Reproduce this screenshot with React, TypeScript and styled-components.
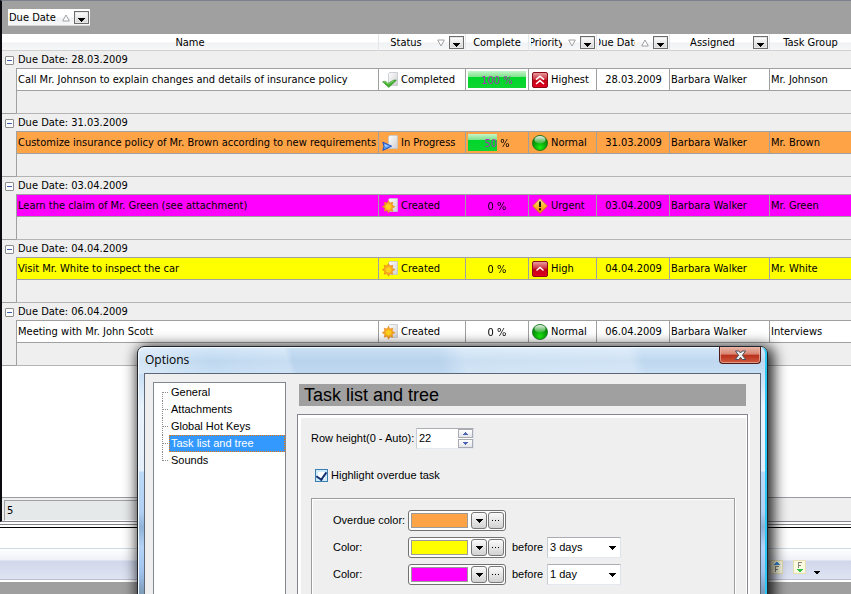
import React, { useState } from "react";
import styled, { createGlobalStyle, css } from "styled-components";

const GlobalStyle = createGlobalStyle`
  * { box-sizing: border-box; }
  body { margin: 0; overflow: hidden; }
  button, input, select { font: inherit; color: inherit; margin: 0; }
`;

const listFont = `"DejaVu Sans Condensed", "Noto Sans", sans-serif`;
const dialogFont = `"Liberation Sans", sans-serif`;
const line = "#a0a0a0";

const Page = styled.div`
  position: relative;
  display: flex;
  flex-direction: column;
  height: 100vh;
  overflow: hidden;
  background: #fff;
  color: #000;
  font: 11px/14px ${listFont};
`;

const TaskWindow = styled.main`
  flex: 1;
  display: flex;
  flex-direction: column;
  border-left: 2px solid #0b0b10;
  border-top: 1px solid #7c808c;
  border-bottom: 1px solid #85858f;
  background: #fff;
`;

const GroupPanel = styled.div`
  display: flex;
  padding: 8px 6px;
  background: ${line};
`;

const headerFill = css`
  background: linear-gradient(#fff 0 50%, #f1f2f4 55%, #f6f7f8);
`;

const GroupChip = styled.div`
  display: flex;
  align-items: center;
  height: 17px;
  padding: 1px 1px 0;
  border-bottom: 1px solid #d5d5d5;
  ${headerFill}
`;

const HeadInner = styled.div`
  display: flex;
  align-items: center;
  height: 15px;
`;

const HeadLabel = styled.span`
  display: flex;
  flex: 1;
  min-width: 0;
  justify-content: center;
  overflow: hidden;
  white-space: nowrap;
`;

const SortMark = styled.svg`
  flex: none;
  width: 8px;
  height: 8px;
  margin: 0 4px 0 6px;
`;

const FilterButton = styled.button`
  flex: none;
  width: 15px;
  height: 13px;
  padding: 0;
  border: 1px solid #6c6c6c;
  background: linear-gradient(#fff, #d4d4d4);
  box-shadow: inset 0 0 0 1px #e8e8e8;
  line-height: 0;
  svg { display: block; margin: 5px auto 0; }
`;

const TaskTable = styled.table`
  width: 100%;
  table-layout: fixed;
  border-spacing: 0;
  td, th { padding: 0; font-weight: normal; white-space: nowrap; }
`;

const Column = styled.col<{ $w?: number }>`
  ${(p) => p.$w && `width: ${p.$w}px;`}
`;

const HeadCell = styled.th<{ $tool?: boolean }>`
  && { padding-top: 1px; }
  height: 17px;
  border-bottom: 1px solid #d0d0d0;
  border-left: 1px solid #e4e6ea;
  &:first-child { border-left: 0; }
  ${headerFill}
  ${HeadInner} { padding: ${(p) => (p.$tool ? "0 1px 0 2px" : "0")}; }
`;

const GroupCell = styled.td`
  height: 17px;
  background: #efefef;
`;

const GroupTitle = styled.div`
  display: flex;
  align-items: center;
  gap: 4px;
  height: 17px;
  padding: 1px 0 0 3px;
`;

const Collapse = styled.button`
  width: 9px;
  height: 9px;
  padding: 0 1px;
  border: 1px solid #8c8c8c;
  border-radius: 1px;
  background: #fff;
  &::after { content: ""; display: block; height: 1px; background: #3f5fae; }
`;

const Indent = styled.td`
  background: #efefef;
`;

const BottomIndent = styled(Indent)`
  border-bottom: 1px solid ${line};
`;

const TaskRow = styled.tr<{ $fill: string }>`
  td:not(:first-child) {
    height: 23px;
    border: solid ${line};
    border-width: 1px 0 1px 1px;
    background: ${(p) => p.$fill};
  }
`;

const Cell = styled.div<{ $pad?: number; $center?: boolean }>`
  display: flex;
  align-items: center;
  justify-content: ${(p) => (p.$center ? "center" : "flex-start")};
  gap: 3px;
  height: 21px;
  padding-top: 1px;
  padding-left: ${(p) => p.$pad ?? 1}px;
  overflow: hidden;
  svg { flex: none; }
`;

const Spacer = styled.td`
  height: 23px;
  border-left: 1px solid ${line};
  border-bottom: 1px solid #b4b4b4;
  background: #efefef;
`;

const Progress = styled.div<{ $value: number }>`
  height: 17px;
  margin: 0 2px;
  background: linear-gradient(#c6f5c9, #7be28a 35%, #00d62c 36%, #0fd52f) no-repeat;
  background-size: ${(p) => p.$value}% 100%;
`;

const ProgressText = styled.span<{ $value: number }>`
  display: block;
  padding-top: 2px;
  line-height: 15px;
  text-align: center;
  color: transparent;
  background: linear-gradient(to right, #b02cb4 ${(p) => p.$value}%, #000 ${(p) => p.$value}%);
  background-clip: text;
`;

const Blank = styled.div`
  flex: 1;
`;

const Footer = styled.footer`
  display: grid;
  grid-template-columns: 373px 1fr;
  height: 24px;
  padding: 2px;
  border-top: 1px solid #9a9aa2;
  background: #efefef;
`;

const FooterCell = styled.div`
  padding: 1px 2px;
  border: 1px solid;
  border-color: ${line} #fff #fff ${line};
  background: #e6e9e9;
  line-height: 17px;
`;

const Splitter = styled.div`
  height: 6px;
  border-top: 1px solid #fff;
  border-bottom: 1px solid #000;
  background: linear-gradient(#fff 0 1px, #808089 1px 2px, #fff 2px);
`;

const BottomHead = styled.div`
  height: 21px;
  border-bottom: 1px solid #cfd9e4;
`;

const BottomBar = styled.div`
  display: flex;
  align-items: center;
  justify-content: flex-end;
  gap: 10px;
  height: 33px;
  padding: 4px 31px 0 0;
  border-bottom: 2px solid #fff;
  background: linear-gradient(#fff 0, #eef1f8 11px, #d1d7eb 12px, #dfe4f4 30px, #b9c0d2 30px 31px);
`;

const BarButton = styled.button`
  padding: 0;
  border: 0;
  background: none;
  line-height: 0;
`;

const MoreButton = styled(BarButton)`
  margin-left: -2px;
  padding-top: 12px;
`;

const BottomBody = styled.div`
  height: 12px;
  background: #9f9f9f;
`;

/* ---------- dialog ---------- */

const Dialog = styled.section`
  position: absolute;
  top: 346px;
  left: 137px;
  right: 83px;
  display: flex;
  flex-direction: column;
  min-height: 300px;
  padding: 0 6px;
  border: 1px solid #20242c;
  border-radius: 7px 7px 0 0;
  background:
    linear-gradient(75deg, #ffffff55 0, transparent 12%, #ffffff22 24%, #9fc0e033 25%, #9fc0e033 48%, #ffffff33 52%, #ffffff44 78%, transparent 80%) 0 0 / 100% 27px no-repeat,
    linear-gradient(#d5e8fa 0, #bfd8ef 14px, #c8dff5 27px, #e9f3fc 60px, #e4effb 124px, #bcd9f8 125px, #b2d0f2 165px, #8fb2d6 180px, #b5d3f6 200px, #9fc2ee 225px, #809dba 245px);
  box-shadow: inset 1px 1px 0 #f4faff, inset -2px 0 0 #2cc8f5, 3px 3px 14px 3px rgba(0, 0, 0, 0.85);
  font: 11px/13px ${dialogFont};
`;

const TitleBar = styled.header`
  display: flex;
  align-items: flex-start;
  justify-content: space-between;
  height: 26px;
  padding-left: 1px;
`;

const Title = styled.h1`
  margin: 0;
  font: 12px/26px "Open Sans", "Noto Sans", sans-serif;
`;

const CloseButton = styled.button`
  display: grid;
  place-items: center;
  width: 42px;
  height: 17px;
  padding: 0;
  border: 1px solid #4d1a1a;
  border-top: 0;
  border-radius: 0 0 4px 4px;
  background: linear-gradient(#e8b5a6, #d98471 45%, #b8301a 50%, #cf5a40);
  box-shadow: inset 0 0 0 1px #f0b8a8aa;
`;

const Body = styled.div`
  flex: 1;
  display: grid;
  grid-template-columns: 133px 1fr;
  column-gap: 11px;
  padding: 8px 12px 0 8px;
  border: 1px solid #5b6676;
  background: #efefef;
`;

const Tree = styled.ul`
  margin: 0;
  padding: 1px 0 0 7px;
  border: 1px solid #828790;
  background: #fff;
  list-style: none;
`;

const TreeItem = styled.li`
  display: flex;
  height: 17px;
`;

const TreeButton = styled.button<{ $on: boolean }>`
  padding: 0 1px;
  border: 1px dotted transparent;
  background: none;
  text-align: left;
  white-space: nowrap;
  ${(p) =>
    p.$on &&
    css`
      flex: 1;
      border-color: #f07800;
      background: #3399ff;
      color: #fff;
    `}
`;

const Content = styled.div`
  display: flex;
  flex-direction: column;
  gap: 8px;
  padding-top: 2px;
`;

const Heading = styled.h2`
  margin: 0 2px;
  padding-left: 5px;
  background: ${line};
  font: 18px/22px ${dialogFont};
`;

const Panel = styled.div`
  flex: 1;
  display: flex;
  flex-direction: column;
  padding: 13px 13px 0;
  border: 1px solid #85858f;
  border-bottom: 0;
  box-shadow: inset 3px 3px 0 #fff, inset -1px 0 0 #fff, 2px 0 0 #fff;
`;

const Field = styled.div`
  display: flex;
  align-items: center;
  label { white-space: nowrap; }
`;

const HeightLabel = styled.label`
  width: 105px;
`;

const Spin = styled.div`
  display: flex;
  width: 58px;
  height: 21px;
  border: 1px solid;
  border-color: #abadb3 #dde3ec #e3e9ef #c8ced8;
  background: #fff;
`;

const SpinInput = styled.input`
  flex: 1;
  min-width: 0;
  padding: 0 2px;
  border: 0;
  outline: 0;
  background: none;
  appearance: textfield;
  &::-webkit-inner-spin-button { appearance: none; }
`;

const SpinArrows = styled.div`
  display: grid;
  grid-template-rows: 1fr 1fr;
  gap: 1px;
  width: 15px;
`;

const SpinButton = styled.button`
  display: grid;
  place-items: center;
  padding: 0;
  border: 1px solid #a9abb0;
  background: linear-gradient(#fff, #e2e4e8);
`;

const CheckField = styled(Field)`
  gap: 3px;
  margin: 20px 0 16px 4px;
`;

const Check = styled.input`
  display: grid;
  place-items: center;
  appearance: none;
  width: 13px;
  height: 13px;
  border: 1px solid #3c7fb1;
  background: #fff;
  box-shadow: inset 0 0 0 2px #cfeafb;
  &:checked::after {
    content: "";
    width: 5px;
    height: 8px;
    margin-bottom: 2px;
    border: solid #12306f;
    border-width: 0 2px 2px 0;
    rotate: 35deg;
  }
`;

const Colors = styled.fieldset`
  flex: 1;
  display: flex;
  flex-direction: column;
  gap: 6px;
  min-width: 0;
  margin: 0 -1px 0 0;
  padding: 11px 21px 0;
  border: 1px solid #9c9c9c;
  border-bottom: 0;
  box-shadow: inset 1px 1px 0 #fff, 1px 0 0 #fff;
`;

const ColorLabel = styled.label`
  width: 75px;
`;

const BeforeLabel = styled.label`
  width: 41px;
  padding-left: 6px;
`;

const Picker = styled.div`
  display: flex;
  gap: 1px;
  width: 98px;
  height: 21px;
  padding: 1px;
  border: 1px solid #727272;
  border-radius: 3px;
  background: #fff;
`;

const Swatch = styled.button<{ $color: string }>`
  flex: 1;
  margin: 1px 2px 1px 1px;
  padding: 0;
  border: 1px solid #9c9c9c;
  background: ${(p) => p.$color};
`;

const PickerButton = styled.button`
  display: grid;
  place-items: center;
  width: 16px;
  padding: 0;
  border: 1px solid #777;
  border-radius: 3px;
  background: linear-gradient(#fafafa, #d2d2d2);
`;

const SelectBox = styled.div`
  display: grid;
  align-items: center;
  width: 74px;
  height: 21px;
  border: 1px solid;
  border-color: #abadb3 #dde3ec #e3e9ef #c8ced8;
  background: #fff;
  > * { grid-area: 1 / 1; }
  svg { justify-self: end; margin-right: 4px; pointer-events: none; }
`;

const Select = styled.select`
  width: 100%;
  height: 18px;
  padding: 0 2px;
  border: 0;
  outline: 0;
  appearance: none;
  background: none;
`;

/* ---------- drawings ---------- */

const Down = ({ w = 7 }: { w?: number }) => (
  <svg width={w} height="4" viewBox="0 0 7 4" shapeRendering="crispEdges">
    <path d="M0 0h7v1H6v1H5v1H4v1H3V3H2V2H1V1H0z" fill="#000" />
  </svg>
);

const Sort = ({ up }: { up?: boolean }) => (
  <SortMark viewBox="0 0 8 8">
    <path d={up ? "M4 1L7.3 7H.7z" : "M4 7L.7 1h6.6z"} fill="#fff" stroke="#a0a0a0" strokeWidth="1" />
  </SortMark>
);

const Filter = ({ name }: { name: string }) => (
  <FilterButton aria-label={`Filter ${name}`}>
    <Down />
  </FilterButton>
);

const Paper = ({ children }: { children: React.ReactNode }) => (
  <svg width="16" height="16" viewBox="0 0 16 16">
    <defs>
      <linearGradient id="paper" x1="0" y1="0" x2="1" y2="1">
        <stop offset="0" stopColor="#fff" />
        <stop offset="1" stopColor="#cfcfd2" />
      </linearGradient>
    </defs>
    <path d="M7.5.5h8v13h-9V2z" fill="url(#paper)" stroke="#c3c6cc" strokeWidth=".8" />
    {children}
  </svg>
);

type Status = "Completed" | "In Progress" | "Created";
type Priority = "Highest" | "High" | "Urgent" | "Normal";

const StatusIcon = ({ status }: { status: Status }) => {
  if (status === "Completed")
    return (
      <Paper>
        <path d="M.6 9.8l3-.6 2.2 2.2L12 8l2.400.2-7.600 7.200z" fill="#3fae2c" stroke="#2c8d1e" strokeWidth=".6" />
        <path d="M2 10l1.600-.2 2.300 2.400L12 8.800" fill="none" stroke="#8fe07c" strokeWidth=".8" />
      </Paper>
    );
  if (status === "In Progress")
    return (
      <Paper>
        <path d="M.8 7.200L9.600 11.200.8 15.400 2 11.300z" fill="#5a9bf5" stroke="#1d4fc0" />
        <path d="M2.500 9.300l4.500 1.900-4 .2z" fill="#b9dbff" />
      </Paper>
    );
  return (
    <Paper>
      <path
        d="M6.500 2.400L7.900 5.100 10.800 4.200 10.100 7.100 12.800 8.700 10.100 10.300 10.800 13.200 7.900 12.500 6.500 15.200 5.100 12.500 2.200 13.200 2.900 10.300.3 8.700 2.900 7.100 2.200 4.200 5.100 5.100z"
        fill="#f9a424"
        stroke="#e58416"
        strokeWidth=".6"
      />
      <circle cx="6.500" cy="8.800" r="3" fill="#ffd21e" stroke="#f4b01c" strokeWidth=".6" />
    </Paper>
  );
};

const PriorityIcon = ({ priority }: { priority: Priority }) => (
  <svg width="16" height="16" viewBox="0 0 16 16">
    <defs>
      <linearGradient id="red" x1="0" y1="0" x2="0" y2="1">
        <stop offset="0" stopColor="#e9a3a6" />
        <stop offset=".45" stopColor="#cf3340" />
        <stop offset=".5" stopColor="#c00016" />
        <stop offset="1" stopColor="#e3001f" />
      </linearGradient>
      <radialGradient id="green" cx=".5" cy=".8" r=".75">
        <stop offset="0" stopColor="#1ff012" />
        <stop offset=".5" stopColor="#0ba80a" />
        <stop offset="1" stopColor="#067a0a" />
      </radialGradient>
      <linearGradient id="gloss" x1="0" y1="0" x2="0" y2="1">
        <stop offset="0" stopColor="#fff" stopOpacity=".9" />
        <stop offset="1" stopColor="#fff" stopOpacity=".15" />
      </linearGradient>
      <linearGradient id="amber" x1="0" y1="0" x2="0" y2="1">
        <stop offset="0" stopColor="#ffe9a8" />
        <stop offset=".5" stopColor="#ffb52a" />
        <stop offset="1" stopColor="#ee7d00" />
      </linearGradient>
    </defs>
    {(priority === "Highest" || priority === "High") && (
      <rect x=".5" y=".5" width="15" height="15" rx="1.5" fill="url(#red)" stroke="#8c0a18" />
    )}
    {priority === "Highest" && (
      <path d="M4 7.600L8 4.200l4 3.400M4 12l4-3.400 4 3.400" fill="none" stroke="#fff" strokeWidth="1.500" />
    )}
    {priority === "High" && <path d="M4.500 9.500L8 6.500l3.500 3" fill="none" stroke="#fff" strokeWidth="1.500" />}
    {priority === "Normal" && (
      <>
        <circle cx="8" cy="8" r="7.600" fill="url(#green)" stroke="#0b6b12" strokeWidth=".7" />
        <ellipse cx="8" cy="4.800" rx="5.600" ry="3.800" fill="url(#gloss)" />
      </>
    )}
    {priority === "Urgent" && (
      <>
        <path d="M8 .6L15.400 8 8 15.400.6 8z" fill="url(#amber)" stroke="#c96f10" strokeWidth=".8" strokeLinejoin="round" />
        <path d="M7 3.500h2v5.500H7zM7 10.200h2v2H7z" fill="#1a1208" />
      </>
    )}
  </svg>
);

const Branch = ({ first, last }: { first?: boolean; last?: boolean }) => (
  <svg width="8" height="17" viewBox="0 0 8 17" shapeRendering="crispEdges">
    <path
      d={`M1.500 ${first ? 8 : 0}V${last ? 9 : 17}M2 8.500H8`}
      fill="none"
      stroke="#8d8d8d"
      strokeDasharray="1 1"
    />
  </svg>
);

const SpinMark = ({ up }: { up?: boolean }) => (
  <svg width="5" height="3" viewBox="0 0 5 3" shapeRendering="crispEdges">
    <path d={up ? "M2 0h1v1h1v1h1v1H0V2h1V1h1z" : "M0 0h5v1H4v1H3v1H2V2H1V1H0z"} fill="#4a66b4" />
  </svg>
);

const FilterMark = ({ up }: { up?: boolean }) => (
  <svg width="13" height="14" viewBox="0 0 13 14" shapeRendering="crispEdges">
    <rect x=".5" y=".5" width="12" height="13" fill="#fbfae0" stroke="#e6dfb4" />
    {up ? (
      <path d="M6 2h2v1h1v1h1v1H4V4h1V3h1z" fill="#3c8fdc" />
    ) : (
      <path d="M4 9h6v1H9v1H8v1H6v-1H5v-1H4z" fill="#35c24a" />
    )}
    <path d={up ? "M5 12V6.500h4M5 9.500h3" : "M5 8V2.500h4M5 5.500h3"} fill="none" stroke="#85857a" strokeWidth="1" />
  </svg>
);

const CloseMark = () => (
  <svg width="13" height="11" viewBox="0 0 13 11">
    <path
      d="M1.500 1h3.300l1.700 2 1.700-2h3.300L8.400 5.300l3.300 4.200H8.300l-1.800-2.200-1.800 2.200H1.300l3.300-4.200z"
      fill="#f4f4f4"
      stroke="#4b4f5c"
      strokeWidth="1"
    />
  </svg>
);

/* ---------- data ---------- */

interface Task {
  due: string;
  name: string;
  status: Status;
  complete: number;
  priority: Priority;
  group: string;
  fill: string;
}

const tasks: Task[] = [
  { due: "28.03.2009", name: "Call Mr. Johnson to explain changes and details of insurance policy", status: "Completed", complete: 100, priority: "Highest", group: "Mr. Johnson", fill: "#ffffff" },
  { due: "31.03.2009", name: "Customize insurance policy of Mr. Brown according to new requirements", status: "In Progress", complete: 50, priority: "Normal", group: "Mr. Brown", fill: "#ffa347" },
  { due: "03.04.2009", name: "Learn the claim of Mr. Green (see attachment)", status: "Created", complete: 0, priority: "Urgent", group: "Mr. Green", fill: "#ff00ff" },
  { due: "04.04.2009", name: "Visit Mr. White to inspect the car", status: "Created", complete: 0, priority: "High", group: "Mr. White", fill: "#ffff00" },
  { due: "06.04.2009", name: "Meeting with Mr. John Scott", status: "Created", complete: 0, priority: "Normal", group: "Interviews", fill: "#ffffff" },
];

const sections = ["General", "Attachments", "Global Hot Keys", "Task list and tree", "Sounds"];

const ColorPicker = ({ id, color }: { id: string; color: string }) => (
  <Picker>
    <Swatch id={id} $color={color} />
    <PickerButton aria-label="Choose colour">
      <Down />
    </PickerButton>
    <PickerButton aria-label="More colours">
      <svg width="8" height="2" viewBox="0 0 8 2" shapeRendering="crispEdges">
        <path d="M0 0h1v1H0zM3 0h1v1H3zM6 0h1v1H6z" fill="#000" />
      </svg>
    </PickerButton>
  </Picker>
);

const DaySelect = ({ id, value }: { id: string; value: string }) => (
  <SelectBox>
    <Select id={id} defaultValue={value}>
      <option>1 day</option>
      <option>3 days</option>
    </Select>
    <Down />
  </SelectBox>
);

const OptionsDialog = () => {
  const [section, setSection] = useState("Task list and tree");
  return (
    <Dialog role="dialog" aria-labelledby="options-title">
      <TitleBar>
        <Title id="options-title">Options</Title>
        <CloseButton aria-label="Close">
          <CloseMark />
        </CloseButton>
      </TitleBar>
      <Body>
        <Tree>
          {sections.map((s, i) => (
            <TreeItem key={s}>
              <Branch first={i === 0} last={i === sections.length - 1} />
              <TreeButton $on={s === section} onClick={() => setSection(s)}>
                {s}
              </TreeButton>
            </TreeItem>
          ))}
        </Tree>
        <Content>
          <Heading>{section}</Heading>
          <Panel>
            <Field>
              <HeightLabel htmlFor="row-height">Row height(0 - Auto):</HeightLabel>
              <Spin>
                <SpinInput id="row-height" type="number" defaultValue={22} />
                <SpinArrows>
                  <SpinButton aria-label="Increase">
                    <SpinMark up />
                  </SpinButton>
                  <SpinButton aria-label="Decrease">
                    <SpinMark />
                  </SpinButton>
                </SpinArrows>
              </Spin>
            </Field>
            <CheckField>
              <Check id="highlight" type="checkbox" defaultChecked />
              <label htmlFor="highlight">Highlight overdue task</label>
            </CheckField>
            <Colors>
              <Field>
                <ColorLabel htmlFor="overdue">Overdue color:</ColorLabel>
                <ColorPicker id="overdue" color="#ffa347" />
              </Field>
              <Field>
                <ColorLabel htmlFor="color-3">Color:</ColorLabel>
                <ColorPicker id="color-3" color="#ffff00" />
                <BeforeLabel htmlFor="days-3">before</BeforeLabel>
                <DaySelect id="days-3" value="3 days" />
              </Field>
              <Field>
                <ColorLabel htmlFor="color-1">Color:</ColorLabel>
                <ColorPicker id="color-1" color="#ff00ff" />
                <BeforeLabel htmlFor="days-1">before</BeforeLabel>
                <DaySelect id="days-1" value="1 day" />
              </Field>
            </Colors>
          </Panel>
        </Content>
      </Body>
    </Dialog>
  );
};

const ToolHead = ({ name, sort }: { name: string; sort?: "up" | "down" }) => (
  <HeadCell $tool>
    <HeadInner>
      <HeadLabel>{name}</HeadLabel>
      {sort && <Sort up={sort === "up"} />}
      <Filter name={name} />
    </HeadInner>
  </HeadCell>
);

export default function App() {
  return (
    <Page>
      <GlobalStyle />
      <TaskWindow>
        <GroupPanel>
          <GroupChip>
            Due Date
            <Sort up />
            <Filter name="Due Date group" />
          </GroupChip>
        </GroupPanel>
        <TaskTable>
          <colgroup>
            <Column $w={14} />
            <Column />
            <Column $w={87} />
            <Column $w={63} />
            <Column $w={68} />
            <Column $w={73} />
            <Column $w={100} />
            <Column $w={82} />
          </colgroup>
          <thead>
            <tr>
              <HeadCell colSpan={2}>Name</HeadCell>
              <ToolHead name="Status" sort="down" />
              <HeadCell>Complete</HeadCell>
              <ToolHead name="Priority" sort="down" />
              <ToolHead name="Due Date" sort="up" />
              <ToolHead name="Assigned" />
              <HeadCell>Task Group</HeadCell>
            </tr>
          </thead>
          {tasks.map((t) => (
            <tbody key={t.due}>
              <tr>
                <GroupCell colSpan={8}>
                  <GroupTitle>
                    <Collapse aria-label={`Collapse ${t.due}`} />
                    Due Date: {t.due}
                  </GroupTitle>
                </GroupCell>
              </tr>
              <TaskRow $fill={t.fill}>
                <Indent />
                <td>
                  <Cell>{t.name}</Cell>
                </td>
                <td>
                  <Cell $pad={3}>
                    <StatusIcon status={t.status} />
                    {t.status}
                  </Cell>
                </td>
                <td>
                  <Progress $value={t.complete}>
                    <ProgressText $value={t.complete}>{t.complete} %</ProgressText>
                  </Progress>
                </td>
                <td>
                  <Cell $pad={3}>
                    <PriorityIcon priority={t.priority} />
                    {t.priority}
                  </Cell>
                </td>
                <td>
                  <Cell $center>{t.due}</Cell>
                </td>
                <td>
                  <Cell>Barbara Walker</Cell>
                </td>
                <td>
                  <Cell>{t.group}</Cell>
                </td>
              </TaskRow>
              <tr>
                <BottomIndent />
                <Spacer colSpan={7} />
              </tr>
            </tbody>
          ))}
        </TaskTable>
        <Blank />
        <Footer>
          <FooterCell>5</FooterCell>
        </Footer>
      </TaskWindow>
      <Splitter />
      <BottomHead />
      <BottomBar>
        <BarButton aria-label="Filter up">
          <FilterMark up />
        </BarButton>
        <BarButton aria-label="Filter down">
          <FilterMark />
        </BarButton>
        <MoreButton aria-label="More">
          <Down w={6} />
        </MoreButton>
      </BottomBar>
      <BottomBody />
      <OptionsDialog />
    </Page>
  );
}
